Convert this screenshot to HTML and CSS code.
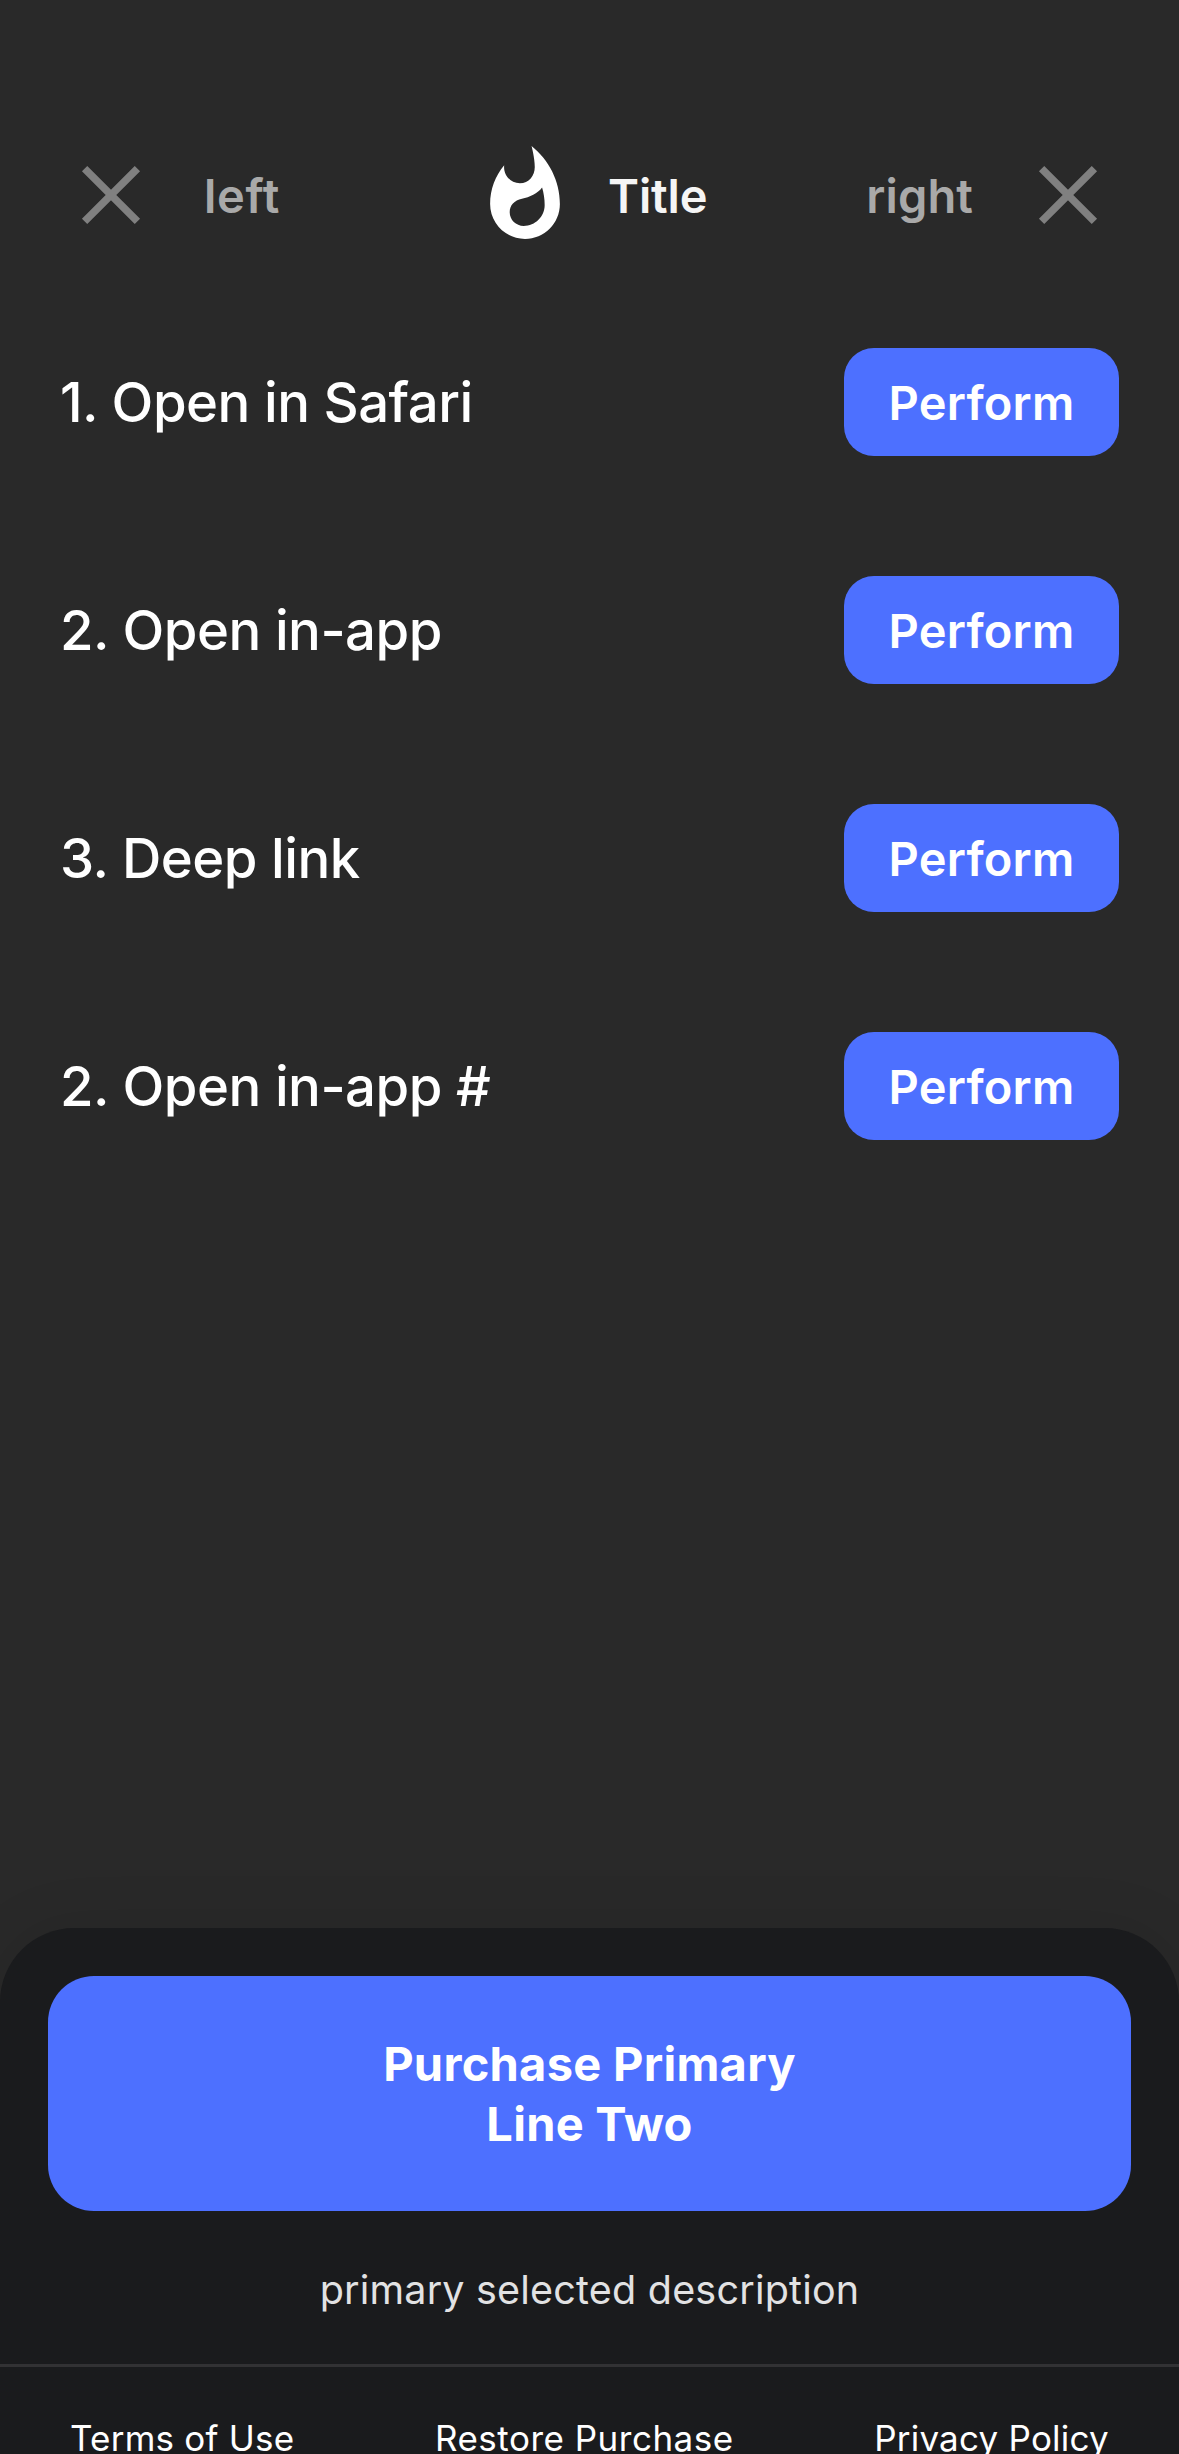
FILE: index.html
```html
<!DOCTYPE html>
<html lang="en">
<head>
<meta charset="utf-8">
<title>Title</title>
<link rel="stylesheet" href="styles.css">
</head>
<body>
<div class="screen">
  <header class="navbar">
    <div class="side side-left">
      <svg class="close" viewBox="0 0 60 60"><path d="M3.6 3.6L56.4 56.4M56.4 3.6L3.6 56.4"/></svg>
      <span class="t-left">left</span>
    </div>
    <div class="brand">
      <svg class="flame" viewBox="4 0.67 16 21.33"><path d="M13.5.67s.74 2.65.74 4.8c0 2.06-1.35 3.73-3.41 3.73-2.07 0-3.63-1.67-3.63-3.73l.03-.36C5.21 7.51 4 10.62 4 14c0 4.42 3.58 8 8 8s8-3.58 8-8C20 8.61 17.41 3.8 13.5.67zM11.71 19c-1.78 0-3.22-1.4-3.22-3.14 0-1.62 1.05-2.76 2.81-3.12 1.77-.36 3.6-1.21 4.62-2.58.39 1.29.59 2.65.59 4.04 0 2.65-2.15 4.8-4.8 4.8z"/></svg>
      <h1 class="t-title">Title</h1>
    </div>
    <div class="side side-right">
      <span class="t-right">right</span>
      <svg class="close" viewBox="0 0 60 60"><path d="M3.6 3.6L56.4 56.4M56.4 3.6L3.6 56.4"/></svg>
    </div>
  </header>
  <main class="list">
    <div class="row"><span class="label">1. Open in Safari</span><button class="perform">Perform</button></div>
    <div class="row"><span class="label">2. Open in-app</span><button class="perform">Perform</button></div>
    <div class="row"><span class="label">3. Deep link</span><button class="perform">Perform</button></div>
    <div class="row"><span class="label">2. Open in-app #</span><button class="perform">Perform</button></div>
  </main>
  <footer class="sheet">
    <button class="purchase"><span>Purchase Primary</span><span>Line Two</span></button>
    <p class="desc">primary selected description</p>
    <nav class="links"><a>Terms of Use</a><a class="restore">Restore Purchase</a><a>Privacy Policy</a></nav>
  </footer>
</div>
</body>
</html>
```
FILE: styles.css
```css
* { box-sizing: border-box; margin: 0; padding: 0; }
body { background: #292929; font-family: Inter, sans-serif; color: #fff; }
.screen { width: 1179px; height: 2454px; overflow: hidden; display: flex; flex-direction: column; background: #292929; }

.navbar { height: 244px; padding: 145px 81px 0; display: flex; align-items: flex-start; }
.side, .brand { display: flex; align-items: center; height: 100px; white-space: nowrap; }
.side { color: #a9a9a9; font-size: 47px; font-weight: 600; }
.side-left { width: 409px; gap: 63px; }
.side-right { margin-left: auto; gap: 65px; }
.close { width: 60px; height: 60px; fill: none; stroke: #808080; stroke-width: 7.5; }
.t-left { letter-spacing: 0.7px; padding-top: 1px; }
.t-right { letter-spacing: 0.1px; padding-top: 1px; }
.brand { gap: 48px; }
.flame { width: 70px; height: 93px; margin-bottom: 5px; fill: #fff; }
.t-title { padding-top: 1px; color: #f5f5f5; font-size: 47px; font-weight: 600; letter-spacing: -0.15px; }

.list { flex: 1; padding: 44px 60px 0; }
.row { height: 228px; padding: 60px 0; display: flex; justify-content: space-between; align-items: center; }
.label { font-size: 54.5px; font-weight: 450; letter-spacing: -0.5px; white-space: nowrap; }
.perform { width: 275px; height: 108px; padding-top: 1px; border: 0; border-radius: 30px; background: #4d70ff; color: #fff; font: 600 47px Inter, sans-serif; letter-spacing: 0.2px; }

.sheet { height: 526px; padding-top: 48px; border-radius: 74px 74px 0 0; background: #1a1b1d; box-shadow: 0 0 60px rgba(0, 0, 0, 0.1); }
.purchase { display: flex; flex-direction: column; align-items: center; justify-content: center; width: 1083px; height: 235px; margin: 0 auto; border: 0; border-radius: 46px; background: #4d70ff; color: #fff; font: 700 47px/60px Inter, sans-serif; letter-spacing: 0.27px; }
.desc { height: 153px; line-height: 159px; text-align: center; font-size: 39.5px; letter-spacing: 0.2px; color: #e2e2e3; }
.links { height: 90px; padding: 47px 70px 0; border-top: 3px solid #323234; display: flex; justify-content: space-between; font-size: 35px; line-height: 48px; letter-spacing: 0.23px; white-space: nowrap; }
.restore { letter-spacing: 0.5px; }
```
